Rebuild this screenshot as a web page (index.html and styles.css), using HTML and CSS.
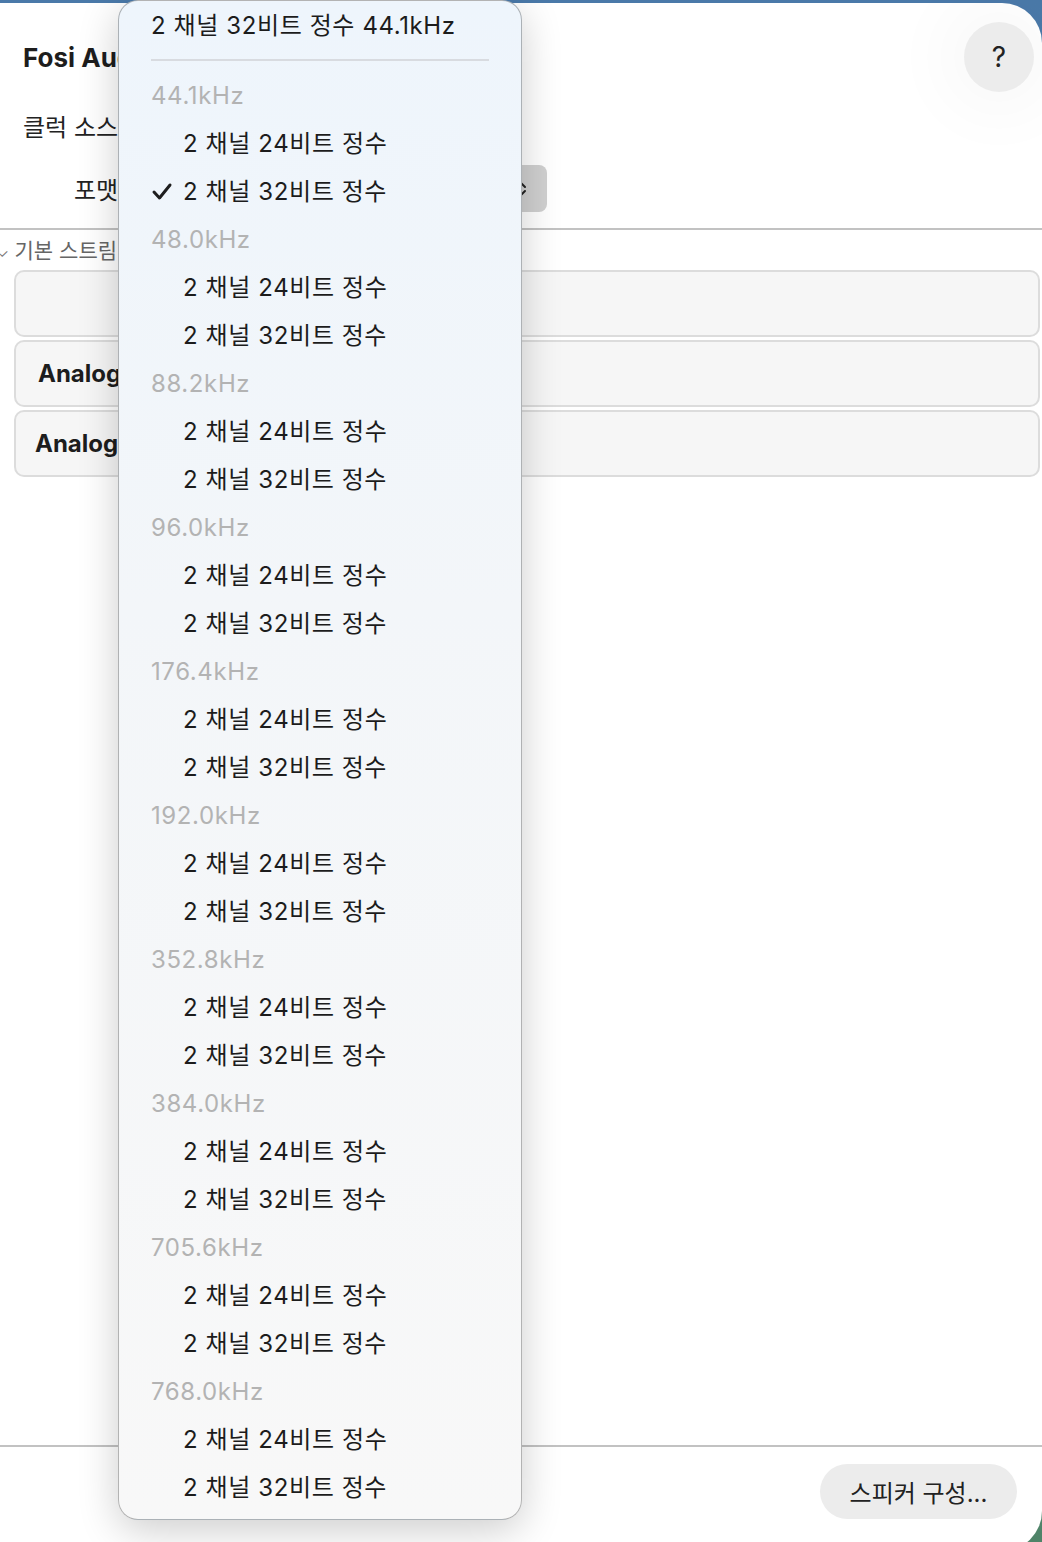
FILE: index.html
```
<!DOCTYPE html>
<html>
<head>
<meta name="viewport" content="width=device-width, initial-scale=1.0">
  <title>Audio MIDI 설정</title>
  <link rel="stylesheet" href="styles.css">
</head>
<body>
  <div class="window">
    <div class="top">
      <h1 class="title">Fosi Audio K7</h1>
      <button class="help">?</button>
    </div>
    <div class="clock-row">클럭 소스: 기본값</div>
    <div class="format-row">
      <span class="label">포맷:</span>
      <div class="select">
        <svg class="updown" width="12" height="18" viewBox="0 0 12 18">
          <polyline points="2,7 6,3 10,7" fill="none" stroke="#222" stroke-width="2" stroke-linecap="round" stroke-linejoin="round"/>
          <polyline points="2,11 6,15 10,11" fill="none" stroke="#222" stroke-width="2" stroke-linecap="round" stroke-linejoin="round"/>
        </svg>
      </div>
    </div>
    <hr class="rule">
    <div class="section-title"><span class="disclose">&#10003;</span> 기본 스트림</div>
    <div class="streams">
      <div class="stream"></div>
      <div class="stream"><b>Analog</b></div>
      <div class="stream second"><b>Analog</b></div>
    </div>
    <div class="spacer"></div>
    <div class="footer">
      <button class="speaker-btn">스피커 구성...</button>
    </div>
  </div>

  <!-- format popup menu, opened over the window -->
  <div class="menu">
    <div class="menu-current">2 채널 32비트 정수 44.1kHz</div>
    <div class="menu-sep"></div>
    <div id="groups"></div>
  </div>

  <script>
    // sample rates shown in the popup
    const rates = ['44.1kHz', '48.0kHz', '88.2kHz', '96.0kHz', '176.4kHz',
                   '192.0kHz', '352.8kHz', '384.0kHz', '705.6kHz', '768.0kHz'];
    const formats = ['2 채널 24비트 정수', '2 채널 32비트 정수'];
    const groups = document.getElementById('groups');

    rates.forEach(function (rate, i) {
      const head = document.createElement('div');
      head.className = 'menu-head';
      head.textContent = rate;
      groups.appendChild(head);

      formats.forEach(function (fmt, j) {
        const item = document.createElement('div');
        item.className = 'menu-item';
        const check = document.createElement('span');
        check.className = 'check';
        if (i === 0 && j === 1) {
          check.innerHTML = '<svg width="22" height="20" viewBox="0 0 22 20"><polyline points="3,10 8.5,16 19,3" fill="none" stroke="#1e1e1e" stroke-width="3" stroke-linecap="round" stroke-linejoin="round"/></svg>';
        }
        item.appendChild(check);
        const text = document.createElement('span');
        text.textContent = fmt;
        item.appendChild(text);
        groups.appendChild(item);
      });
    });
  </script>
</body>
</html>
```

FILE: styles.css
```
html, body {
  margin: 0;
  height: 1542px;
  overflow: hidden;
}

body {
  font-family: "Inter", "Noto Sans CJK KR", sans-serif;
  color: #222;
  background: linear-gradient(180deg, #4a79a9 0%, #4f7f9a 60%, #4f8468 100%);
  position: relative;
}

.window {
  margin-top: 3px;
  height: 1548px;
  background-color: #fff;
  border-radius: 0 40px 40px 0;
  display: flex;
  flex-direction: column;
}

.top {
  display: flex;
  justify-content: space-between;
  align-items: center;
  padding: 19px 8px 0 23px;
}

.title {
  margin: 0;
  font-size: 26px;
  font-weight: 700;
  color: #1d1d1d;
  white-space: nowrap;
}

.help {
  width: 70px;
  height: 70px;
  border: none;
  border-radius: 50%;
  background-color: #ececec;
  font-family: inherit;
  font-size: 28px;
  color: #222;
  box-shadow: 0 0 60px 30px rgba(0, 0, 0, 0.025);
}

.clock-row {
  margin-top: 16px;
  padding-left: 23px;
  height: 40px;
  line-height: 40px;
  font-size: 24px;
  white-space: nowrap;
}

.format-row {
  margin-top: 17px;
  display: flex;
  align-items: center;
  height: 47px;
}

.label {
  width: 120px;
  flex-shrink: 0;
  padding-left: 74px;
  box-sizing: border-box;
  font-size: 24px;
  white-space: nowrap;
}

.select {
  width: 422px;
  height: 47px;
  margin-left: 5px;
  background-color: #d0d0d0;
  border-radius: 8px;
  display: flex;
  align-items: center;
  justify-content: flex-end;
  padding: 0 20px;
  box-sizing: border-box;
}

.rule {
  margin: 16px 0 0;
  border: none;
  height: 2px;
  background-color: #c2c2c2;
}

.section-title {
  margin-top: 10px;
  height: 22px;
  line-height: 22px;
  font-size: 21px;
  color: #666;
  white-space: nowrap;
}

.disclose {
  font-size: 12px;
  color: #777;
  margin-left: -2px;
}

.streams {
  margin: 8px 2px 0 14px;
  display: flex;
  flex-direction: column;
  gap: 3px;
}

.stream {
  height: 67px;
  box-sizing: border-box;
  border: 2px solid #dcdcdc;
  border-radius: 10px;
  background-color: #f6f6f6;
  display: flex;
  align-items: center;
  padding-left: 22px;
  font-size: 24px;
  color: #1d1d1d;
}

.stream.second {
  padding-left: 19px;
}

.spacer {
  flex: 1;
}

.footer {
  height: 106px;
  border-top: 2px solid #c2c2c2;
  display: flex;
  justify-content: flex-end;
  align-items: flex-start;
  padding: 17px 25px 0 0;
  box-sizing: border-box;
}

.speaker-btn {
  width: 197px;
  height: 55px;
  border: none;
  border-radius: 28px;
  background-color: #ececec;
  font-family: inherit;
  font-size: 24px;
  color: #222;
}

/* popup menu */
.menu {
  position: absolute;
  left: 118px;
  top: 0;
  width: 404px;
  height: 1520px;
  box-sizing: border-box;
  padding: 1px 32px 0 32px;
  border: 1px solid rgba(0, 0, 0, 0.28);
  border-radius: 20px;
  background: linear-gradient(180deg, #eef5fc 0%, #f3f6f9 40%, #f8f8f8 100%);
  box-shadow: 0 10px 40px rgba(0, 0, 0, 0.2);
  font-size: 24px;
  letter-spacing: 0.6px;
  color: #1c1c1c;
}

.menu-current {
  height: 48px;
  line-height: 48px;
}

.menu-sep {
  height: 2px;
  background-color: #d8dbe0;
  margin: 9px 0 11px;
}

.menu-head {
  height: 48px;
  line-height: 48px;
  color: #b3b3b3;
}

.menu-item {
  height: 48px;
  line-height: 48px;
  display: flex;
}

.check {
  width: 32px;
  height: 48px;
  flex-shrink: 0;
  display: flex;
  align-items: center;
}
```
